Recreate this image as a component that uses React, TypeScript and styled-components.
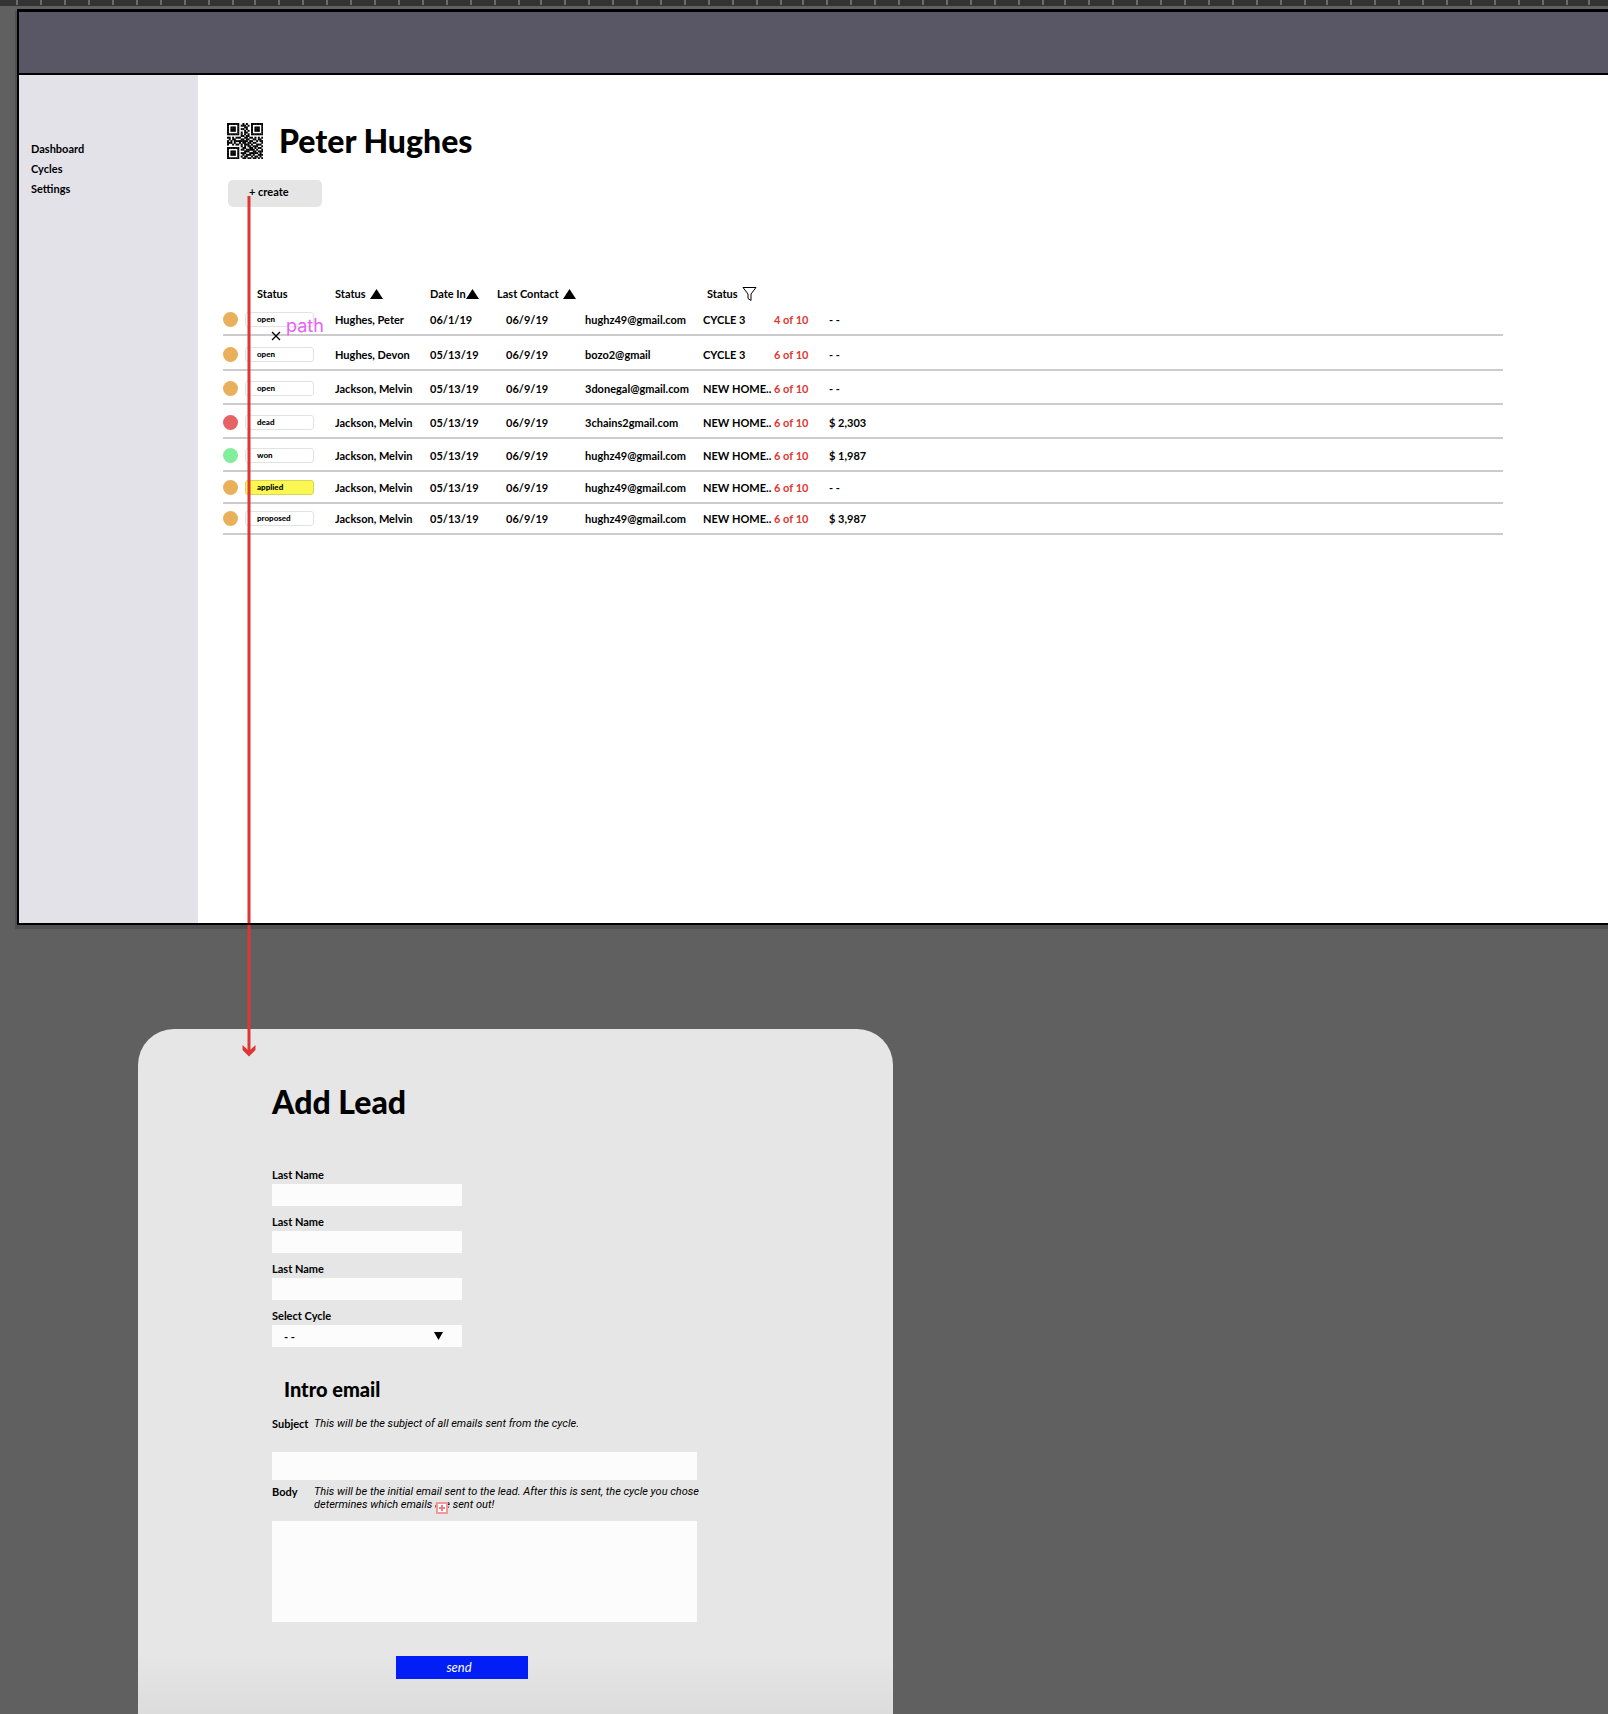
import React from "react";
import styled, { createGlobalStyle } from "styled-components";

const GlobalStyle = createGlobalStyle`
  *, *::before, *::after { box-sizing: border-box; }
  body {
    margin: 0;
    background: #606060;
    color: #000;
    font: 700 11px/15px Lato, "Open Sans", sans-serif;
  }
  h1, h2, h3, p { margin: 0; }
  svg { display: block; flex: none; }
  button, input, select, textarea { font: inherit; color: inherit; }
`;

const Canvas = styled.div`
  position: relative;
  display: flex;
  flex-direction: column;
  min-height: 100vh;
  overflow: hidden;
`;

const Ruler = styled.div`
  height: 6px;
  background: #333;
  overflow: hidden;
`;

const Artboard = styled.section`
  display: flex;
  flex-direction: column;
  margin: 3px 0 0 17px;
  border: 2px solid #000;
  border-top-width: 3px;
  border-right: 0;
  background: #fff;
  box-shadow: -1px 3px 0 1px #4f4f4f;
`;

const TopBar = styled.header`
  height: 63px;
  background: #595766;
  border-bottom: 2px solid #000;
`;

const Body = styled.div`
  display: flex;
  min-height: 848px;
`;

const Sidebar = styled.nav`
  flex: none;
  display: flex;
  flex-direction: column;
  gap: 5px;
  width: 179px;
  padding: 66px 12px;
  background: #e3e2e8;
`;

const NavLink = styled.a`
  color: #000;
  text-decoration: none;
`;

const Main = styled.main`
  flex: 1;
  min-width: 0;
  padding: 48px 105px 0 25px;
`;

const Heading = styled.div`
  display: flex;
  align-items: center;
  gap: 16px;
  padding-left: 4px;
`;

const Title = styled.h1`
  font-size: 32px;
  font-weight: 900;
  line-height: 36px;
`;

const CreateButton = styled.button`
  display: block;
  width: 94px;
  height: 27px;
  margin: 21px 0 74px 5px;
  padding: 0 0 4px 21px;
  border: 0;
  border-radius: 5px;
  background: #e5e5e5;
  text-align: left;
`;

const Table = styled.table`
  width: 100%;
  table-layout: fixed;
  border-collapse: separate;
  border-spacing: 0;
`;

const HeadCell = styled.th<{ $inset?: number }>`
  height: 24px;
  padding: 5px 0 0 ${(p) => p.$inset ?? 0}px;
  text-align: left;
  vertical-align: top;
  white-space: nowrap;
`;

const HeadLabel = styled.span<{ $gap?: number }>`
  display: flex;
  align-items: center;
  gap: ${(p) => p.$gap ?? 0}px;
`;

const Row = styled.tr<{ $height: number }>`
  height: ${(p) => p.$height}px;
`;

const Cell = styled.td<{ $inset?: number; $accent?: boolean }>`
  padding: 0 0 7px ${(p) => p.$inset ?? 0}px;
  border-bottom: 2px solid #ccc;
  vertical-align: bottom;
  white-space: nowrap;
  color: ${(p) => (p.$accent ? "#dc3732" : "#000")};
`;

const Dot = styled.span<{ $color: string }>`
  display: block;
  width: 15px;
  height: 15px;
  border-radius: 50%;
  background: ${(p) => p.$color};
`;

const Pill = styled.span<{ $filled?: boolean }>`
  display: block;
  width: 69px;
  height: 15px;
  padding-left: 11px;
  border: 1px solid ${(p) => (p.$filled ? "#d9d655" : "#e2e2e2")};
  border-radius: 3px;
  background: ${(p) => (p.$filled ? "#faf752" : "#fff")};
  font-size: 8px;
  font-weight: 900;
  line-height: 13px;
`;

const Card = styled.form`
  flex: 1;
  width: 755px;
  max-width: calc(100% - 138px);
  margin: 104px 0 0 138px;
  padding: 53px 134px 34px;
  border-radius: 36px 36px 0 0;
  background: linear-gradient(to top, #dcdcdc, #e6e6e6 60px);
`;

const CardTitle = styled.h2`
  margin-bottom: 45px;
  font-size: 32px;
  font-weight: 900;
  line-height: 40px;
`;

const Field = styled.div`
  display: flex;
  flex-direction: column;
  gap: 2px;
  width: 190px;
  max-width: 100%;
  margin-bottom: 8px;
`;

const boxStyle = `
  display: block;
  width: 100%;
  border: 0;
  border-radius: 0;
  background: #fcfcfc;
`;

const TextInput = styled.input<{ $tall?: boolean }>`
  ${boxStyle}
  height: ${(p) => (p.$tall ? 28 : 22)}px;
  padding: 0 10px;
`;

const SelectWrap = styled.div`
  position: relative;
`;

const Select = styled.select`
  ${boxStyle}
  height: 22px;
  padding: 0 12px;
  appearance: none;
`;

const SelectArrow = styled.svg`
  position: absolute;
  top: 7px;
  right: 19px;
  pointer-events: none;
`;

const SectionTitle = styled.h3`
  margin: 29px 0 15px 12px;
  font-size: 20px;
  font-weight: 900;
  line-height: 26px;
`;

const HintRow = styled.div<{ $space: number }>`
  display: grid;
  grid-template-columns: 42px 1fr;
  width: 432px;
  line-height: 13px;
  margin-bottom: ${(p) => p.$space}px;
`;

const Hint = styled.p`
  position: relative;
  font-family: Roboto, sans-serif;
  font-weight: 400;
  font-style: italic;
`;

const Wide = styled.div`
  width: 425px;
  margin-bottom: 5px;
`;

const TextArea = styled.textarea`
  ${boxStyle}
  height: 101px;
  padding: 6px 10px;
  resize: none;
`;

const SendButton = styled.button`
  display: block;
  width: 132px;
  height: 23px;
  margin: 34px 0 0 124px;
  padding: 0 6px 0 0;
  border: 0;
  background: #001ef5;
  color: #fff;
  font-size: 13px;
  font-style: italic;
  font-weight: 400;
`;

const FlowArrow = styled.svg`
  position: absolute;
  left: 241px;
  top: 196px;
  pointer-events: none;
`;

const PathHint = styled.div`
  position: absolute;
  left: 271px;
  top: 313px;
  display: flex;
  gap: 5px;
  color: #e861f2;
  font: 400 18px/26px Inter, sans-serif;
  pointer-events: none;
  svg { margin-top: 18px; }
`;

const OverflowMark = styled.svg`
  position: absolute;
  left: 122px;
  top: 17px;
`;

const QR_ROWS = [
  "111111100101001111111",
  "100000101110101000001",
  "101110100011001011101",
  "101110101101001011101",
  "101110100010101011101",
  "100000101011001000001",
  "111111101010101111111",
  "000000001101100000000",
  "110101110011011010101",
  "010110001101100110110",
  "101011111111011001011",
  "111010010110110110001",
  "100101101011101001110",
  "000000001010110111001",
  "111111100110011010110",
  "100000101101111101001",
  "101110100011100110111",
  "101110101110011111010",
  "101110100101110100111",
  "100000101011001011010",
  "111111100110110110101",
];

const QrCode = () => (
  <svg width="36" height="36" viewBox="0 0 21 21" role="img" aria-label="QR code">
    {QR_ROWS.map((row, y) =>
      [...row].map((c, x) =>
        c === "1" ? <rect key={`${x}-${y}`} x={x} y={y} width="1.15" height="1.15" fill="#000" /> : null
      )
    )}
  </svg>
);

const SortIcon = () => (
  <svg width="13" height="10" viewBox="0 0 13 10" aria-hidden="true">
    <path d="M6.500 0 13 10H0Z" />
  </svg>
);

const FilterIcon = () => (
  <svg width="15" height="14" viewBox="0 0 15 14" fill="none" stroke="#000" aria-hidden="true">
    <path d="M1 .5H14L9 7V13.500L6 11.500V7Z" />
  </svg>
);

const ORANGE = "#e8b05a";
const RED = "#e66365";
const GREEN = "#80ee9b";

const LEADS = [
  { h: 31, dot: ORANGE, status: "open", name: "Hughes, Peter", date: "06/1/19", email: "hughz49@gmail.com", cycle: "CYCLE 3", step: "4 of 10", value: "- -" },
  { h: 35, dot: ORANGE, status: "open", name: "Hughes, Devon", date: "05/13/19", email: "bozo2@gmail", cycle: "CYCLE 3", step: "6 of 10", value: "- -" },
  { h: 34, dot: ORANGE, status: "open", name: "Jackson, Melvin", date: "05/13/19", email: "3donegal@gmail.com", cycle: "NEW HOME..", step: "6 of 10", value: "- -" },
  { h: 34, dot: RED, status: "dead", name: "Jackson, Melvin", date: "05/13/19", email: "3chains2gmail.com", cycle: "NEW HOME..", step: "6 of 10", value: "$ 2,303" },
  { h: 33, dot: GREEN, status: "won", name: "Jackson, Melvin", date: "05/13/19", email: "hughz49@gmail.com", cycle: "NEW HOME..", step: "6 of 10", value: "$ 1,987" },
  { h: 32, dot: ORANGE, status: "applied", name: "Jackson, Melvin", date: "05/13/19", email: "hughz49@gmail.com", cycle: "NEW HOME..", step: "6 of 10", value: "- -" },
  { h: 31, dot: ORANGE, status: "proposed", name: "Jackson, Melvin", date: "05/13/19", email: "hughz49@gmail.com", cycle: "NEW HOME..", step: "6 of 10", value: "$ 3,987" },
];

const COLUMNS = [22, 90, 95, 67, 88, 118, 71, 55];

// Ruler marks snap to even pixels, so a step is now and then two pixels short.
const TICKS = Array.from({ length: 160 }, (_, k) => 16 + 2 * Math.ceil(k * 11.91 - 0.1));

export default function App() {
  return (
    <>
      <GlobalStyle />
      <Canvas>
        <Ruler>
          <svg width="100%" height="6" aria-hidden="true">
            {TICKS.map((x) => <rect key={x} x={x} width="2" height="5" fill="#6c6c6c" />)}
          </svg>
        </Ruler>

        <Artboard>
          <TopBar />
          <Body>
            <Sidebar>
              <NavLink href="#dashboard">Dashboard</NavLink>
              <NavLink href="#cycles">Cycles</NavLink>
              <NavLink href="#settings">Settings</NavLink>
            </Sidebar>
            <Main>
              <Heading>
                <QrCode />
                <Title>Peter Hughes</Title>
              </Heading>
              <CreateButton type="button">+ create</CreateButton>
              <Table>
                <colgroup>
                  {COLUMNS.map((w, i) => <col key={i} width={w} />)}
                  <col />
                </colgroup>
                <thead>
                  <tr>
                    <HeadCell />
                    <HeadCell $inset={12}>Status</HeadCell>
                    <HeadCell><HeadLabel $gap={4}>Status<SortIcon /></HeadLabel></HeadCell>
                    <HeadCell><HeadLabel>Date In<SortIcon /></HeadLabel></HeadCell>
                    <HeadCell><HeadLabel $gap={4}>Last Contact<SortIcon /></HeadLabel></HeadCell>
                    <HeadCell />
                    <HeadCell $inset={4}><HeadLabel $gap={4}>Status<FilterIcon /></HeadLabel></HeadCell>
                    <HeadCell />
                    <HeadCell />
                  </tr>
                </thead>
                <tbody>
                  {LEADS.map((lead, i) => (
                    <Row key={i} $height={lead.h}>
                      <Cell><Dot $color={lead.dot} /></Cell>
                      <Cell><Pill $filled={lead.status === "applied"}>{lead.status}</Pill></Cell>
                      <Cell>{lead.name}</Cell>
                      <Cell>{lead.date}</Cell>
                      <Cell $inset={9}>06/9/19</Cell>
                      <Cell>{lead.email}</Cell>
                      <Cell>{lead.cycle}</Cell>
                      <Cell $accent>{lead.step}</Cell>
                      <Cell>{lead.value}</Cell>
                    </Row>
                  ))}
                </tbody>
              </Table>
            </Main>
          </Body>
        </Artboard>

        <Card onSubmit={(e) => e.preventDefault()}>
          <CardTitle>Add Lead</CardTitle>
          {["name-1", "name-2", "name-3"].map((id) => (
            <Field key={id}>
              <label htmlFor={id}>Last Name</label>
              <TextInput id={id} />
            </Field>
          ))}
          <Field>
            <label htmlFor="cycle">Select Cycle</label>
            <SelectWrap>
              <Select id="cycle"><option>- -</option></Select>
              <SelectArrow width="9" height="8" viewBox="0 0 9 8" aria-hidden="true">
                <path d="M0 0H9L4.500 8Z" />
              </SelectArrow>
            </SelectWrap>
          </Field>

          <SectionTitle>Intro email</SectionTitle>
          <HintRow $space={22}>
            <label htmlFor="subject">Subject</label>
            <Hint>This will be the subject of all emails sent from the cycle.</Hint>
          </HintRow>
          <Wide><TextInput id="subject" $tall /></Wide>
          <HintRow $space={10}>
            <label htmlFor="body">Body</label>
            <Hint>
              This will be the initial email sent to the lead. After this is sent, the cycle you chose
              determines which emails are sent out!
              <OverflowMark width="12" height="12" viewBox="0 0 12 12" aria-hidden="true">
                <rect x="1" y="1" width="10" height="10" fill="#fff" stroke="#f19999" strokeWidth="2" />
                <path d="M6 3V9M3 6H9" stroke="#ee7f7f" strokeWidth="2" />
              </OverflowMark>
            </Hint>
          </HintRow>
          <Wide><TextArea id="body" /></Wide>
          <SendButton type="submit">send</SendButton>
        </Card>

        <FlowArrow width="16" height="861" viewBox="0 0 16 861" fill="none" aria-hidden="true">
          <path d="M8 0V727M8 729V856" stroke="#dc3732" strokeWidth="3" />
          <path d="M1.500 849V854L8 860.500 14.500 854V849L8 855Z" fill="#dc3732" />
        </FlowArrow>
        <PathHint>
          <svg width="10" height="10" viewBox="0 0 10 10" aria-hidden="true">
            <path d="M1 1 9 9M9 1 1 9" stroke="#000" strokeWidth="1.300" />
          </svg>
          path
        </PathHint>
      </Canvas>
    </>
  );
}
